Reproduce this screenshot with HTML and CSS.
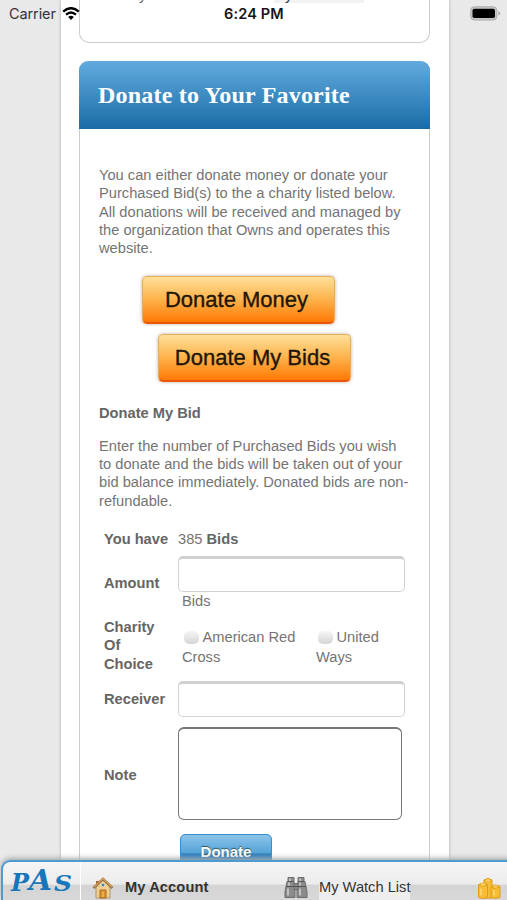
FILE: index.html
```html
<!DOCTYPE html>
<html lang="en">
<head>
<meta charset="utf-8">
<title>Donate to Your Favorite</title>
<link rel="stylesheet" href="styles.css">
</head>
<body>
<main class="page">
  <section class="previous"><span class="tail tail-one">y</span><span class="tail tail-two">y</span></section>
  <section class="card">
    <h1>Donate to Your Favorite</h1>
    <div class="content">
      <p class="intro">You can either donate money or donate your<br>Purchased Bid(s) to the a charity listed below.<br>All donations will be received and managed by<br>the organization that Owns and operates this<br>website.</p>
      <div class="choices">
        <button class="orange"><span>Donate Money</span></button>
        <button class="orange second"><span>Donate My Bids</span></button>
      </div>
      <h2>Donate My Bid</h2>
      <p class="help">Enter the number of Purchased Bids you wish<br>to donate and the bids will be taken out of your<br>bid balance immediately. Donated bids are non-<br>refundable.</p>
      <form class="form">
        <div class="row balance"><b>You have</b><span>385 <b>Bids</b></span></div>
        <div class="row amount"><label for="amount">Amount</label><div><input id="amount" class="field"><span class="unit">Bids</span></div></div>
        <div class="row charity"><b>Charity<br>Of<br>Choice</b><div class="options"><label><i class="radio"></i>American Red<br>Cross</label><label><i class="radio"></i>United<br>Ways</label></div></div>
        <div class="row receiver"><label for="receiver">Receiver</label><input id="receiver" class="field"></div>
        <div class="row note"><label for="note">Note</label><textarea id="note"></textarea></div>
        <button class="submit" type="button">Donate</button>
      </form>
    </div>
  </section>
</main>
<header class="status">
  <span class="carrier">Carrier</span>
  <svg class="wifi" viewBox="0 0 18 13"><path d="M1.2 4.6Q9-2.2 16.8 4.6" fill="none" stroke="#000" stroke-width="2.4"/><path d="M4 7.7Q9 3.3 14 7.7" fill="none" stroke="#000" stroke-width="2.2"/><path d="M6.2 10Q9 7.6 11.8 10L9 13Z"/></svg>
  <span class="time">6:24 PM</span>
  <svg class="battery" viewBox="0 0 31 15"><rect x=".8" y=".8" width="26" height="13.2" rx="3.5" fill="#c8c8c8" stroke="#aaa"/><rect x="2.5" y="2.7" width="22.5" height="9.3" rx="1.8"/><path d="M28.5 5Q31.5 7.3 28.5 9.7Z" fill="#999"/></svg>
</header>
<nav class="bar">
  <div class="brand"><svg viewBox="0 0 80 40"><g class="pas"><text x="11" y="29" font-size="24" textLength="18" lengthAdjust="spacingAndGlyphs">P</text><text x="29" y="28" font-size="28" textLength="23" lengthAdjust="spacingAndGlyphs">A</text><text x="54" y="29" font-size="23" textLength="18" lengthAdjust="spacingAndGlyphs">S</text></g></svg></div>
  <a class="account"><svg viewBox="0 0 22 24"><path d="M4 5h3v6H4z" fill="#a35f38"/><path d="M4 11 11 4l7 7v11H4z" fill="#efcf91" stroke="#aa9474"/><path d="m1.500 12 9.500-9 9.500 9" fill="none" stroke="#8c7053" stroke-width="2.6"/><path d="m2 11 9-8.500 9 8.500" fill="none" stroke="#d59c4e" stroke-width="1.600"/><circle cx="11" cy="9" r="2" fill="#3c85b5" stroke="#f5e3bc"/><path d="M8 22v-8h6v8z" fill="#d99331" stroke="#ad6a1e"/><path d="M10 15.500h2V21h-2z" fill="#e9ad48"/></svg><span>My Account</span></a>
  <a class="watch"><svg viewBox="0 0 24 22"><g fill="#8b8b8b" stroke="#6c6c6c"><path d="M4 1h6v4H4zM14 1h6v4h-6z"/><path d="M3 5h7l1 5H2zM14 5h7l1 5h-9zM2 10h9v11H1v-6zM13 10h9l1 5v6H13z"/><path d="M10 7h4v6h-4z"/></g><path d="M6 2v3M16 2v3M5 6v3M16 6v3M4 12v7M16 12v7" stroke="#c0c0c0" stroke-width="2"/><path d="M4 5h6M14 5h6M2 10h20" stroke="#555"/></svg><span>My Watch List</span></a>
  <a class="coins" aria-label="Coins"><svg viewBox="0 0 24 22"><g fill="#f6bd35" stroke="#e09b19"><path d="M7 2.500v18h8v-18q-4-3-8 0z"/><path d="M1.500 7v13q4 2 9 0V7q-4.500-3-9 0zM14 9v11q4 2 9 0V9q-4.500-3-9 0z"/></g><path d="M7 3q4 3 8 0M1.500 7.500q4 3 9 0M14 9.500q4 3 9 0" fill="none" stroke="#e3a520"/><path d="M9 3h4M4 7h4M17 9h3M4 11v7M17 13v5" stroke="#fdd266" stroke-width="2"/></svg></a>
</nav>
</body>
</html>
```
FILE: styles.css
```css
* { box-sizing: border-box; }
html, body { margin: 0; height: 900px; overflow: hidden; }
body { position: relative; background: #e9e9e9; color: #747474; font: 14.67px/18.35px "Liberation Sans", Arial, sans-serif; }
.page { width: 388px; height: 900px; margin-left: 61px; padding: 0 19px 0 18px; background: #fff; box-shadow: 0 0 3px #aaa; overflow: hidden; }
.previous { position: relative; height: 43px; border: solid #cdcdcd; border-width: 0 1px 1px 1px; border-radius: 0 0 10px 10px; overflow: hidden; }
.previous::before { content: ""; position: absolute; left: 194px; top: 0; width: 90px; height: 3px; background: #f2f2f2; }
.tail { position: absolute; top: -14px; font-size: 15px; color: #666; }
.tail-one { left: 59px; }
.tail-two { left: 205px; color: #333; }
.card { margin-top: 18px; height: 900px; border: solid #cdcdcd; border-width: 0 1px; border-radius: 10px 10px 0 0; }
h1 { height: 68px; margin: 0 -1px; padding-left: 19px; border-radius: 9px 9px 0 0; border-bottom: 1px solid #1769a0; background: linear-gradient(#62abde, #1b6da7); color: #fff; font: bold 24px/68px "Liberation Serif", serif; letter-spacing: .2px; white-space: nowrap; }
.content { padding: 37px 0 0 19px; }
p, h2 { margin: 0; white-space: nowrap; }
.choices { display: flex; flex-direction: column; gap: 10px; padding: 18px 0 0 43px; }
.orange { width: 193px; height: 48px; padding: 0; border: 1px solid #e5ae5e; border-bottom: 2px solid #e95808; border-radius: 5px; background: linear-gradient(#fee09a, #feb44e 48%, #ff7905); box-shadow: 0 0 3px 1px #d8d0c8; color: #1e1608; font: 22px/46px "Liberation Sans", sans-serif; -webkit-text-stroke: .35px #1e1608; }
.second { margin-left: 16px; }
.orange span { position: relative; left: -2px; }
h2 { margin: 22px 0 15px; font-size: 14.67px; line-height: 18px; color: #656565; }
.form { margin-top: 15px; }
.row { display: grid; grid-template-columns: 74px 1fr; margin-left: 5px; }
.row > b, .row > label { color: #656565; font-weight: bold; }
.balance { height: 31px; padding-top: 5px; }
.balance span b { color: #656565; }
.amount { height: 62px; }
.amount > label { padding-top: 18px; }
.field { display: block; width: 227px; height: 36px; border: 1px solid #d2d2d2; border-top: 3px solid #d0d0d0; border-radius: 5px; background: #fff; outline: 0; }
.unit { display: block; padding: 0 0 0 4px; }
.charity { height: 63px; }
.options { display: flex; padding: 10px 0 0 4px; line-height: 19.5px; white-space: nowrap; }
.options label { width: 134px; }
.radio { display: inline-block; width: 15px; height: 13px; margin: 0 3.5px 0 2px; vertical-align: -2px; border-radius: 5px; background: linear-gradient(#f6f6f6, #d5d5d5); }
.receiver { height: 46px; align-items: start; }
.receiver > label { padding-top: 9px; }
.note { height: 93px; }
.note > label { align-self: center; padding-top: 4px; }
textarea { display: block; width: 224px; height: 93px; margin: 0; padding: 3px; border: 1.5px solid #767676; border-top-width: 2px; border-radius: 6px; background: #fff; resize: none; }
.submit { display: block; width: 92px; height: 36px; margin: 14px 0 0 81px; padding: 0; border: 1.5px solid #388ecb; border-radius: 5px; background: linear-gradient(#8dc3e9, #55a4d8 52%, #2e80bc 56%, #3f94cf); color: #fff; font: bold 15px/32px "Liberation Sans", sans-serif; text-shadow: 0 -1px 1px #355; }
.status { position: absolute; inset: 0 0 auto; display: flex; height: 28px; align-items: center; color: #151515; font: 14.5px/28px Inter, sans-serif; }
.carrier { width: 53px; margin-left: 9px; white-space: nowrap; color: #333; letter-spacing: -.1px; }
.wifi { width: 18px; height: 13px; margin-top: -2px; }
.time { width: 70px; margin-left: 144px; font-weight: 600; letter-spacing: .15px; white-space: nowrap; }
.battery { width: 31px; height: 15px; margin: -2px 0 0 176px; }
.bar { position: absolute; left: 1px; right: -4px; bottom: 0; height: 40px; display: flex; overflow: hidden; border: solid #4c9bd2; border-width: 2px 0 0 2px; border-radius: 9px 0 0 0; background: linear-gradient(#f5f5f5, #ececec 58%, #d4d4d4 61%, #d8d8d8); color: #333; box-shadow: 0 -2px 5px #aaa; white-space: nowrap; }
.bar svg { display: block; flex: none; }
.brand { width: 78px; border-right: 1px solid #fff; }
.brand svg { width: 80px; height: 40px; margin-left: -3px; }
.pas { font-family: "DejaVu Serif", serif; font-style: italic; font-weight: bold; fill: #1777ba; }
.account { display: flex; width: 193px; padding: 14px 0 0 11px; font-weight: bold; letter-spacing: .1px; }
.account svg { width: 22px; height: 24px; }
.account span { margin-left: 11px; line-height: 22px; }
.watch { display: flex; width: 203px; padding: 14px 0 0 10px; }
.watch svg { width: 24px; height: 23px; }
.watch span { height: 30px; margin-left: 11px; line-height: 22px; background: linear-gradient(transparent 5px, #eee 6px); }
.coins { padding-top: 15px; }
.coins svg { width: 24px; height: 23px; }
```
